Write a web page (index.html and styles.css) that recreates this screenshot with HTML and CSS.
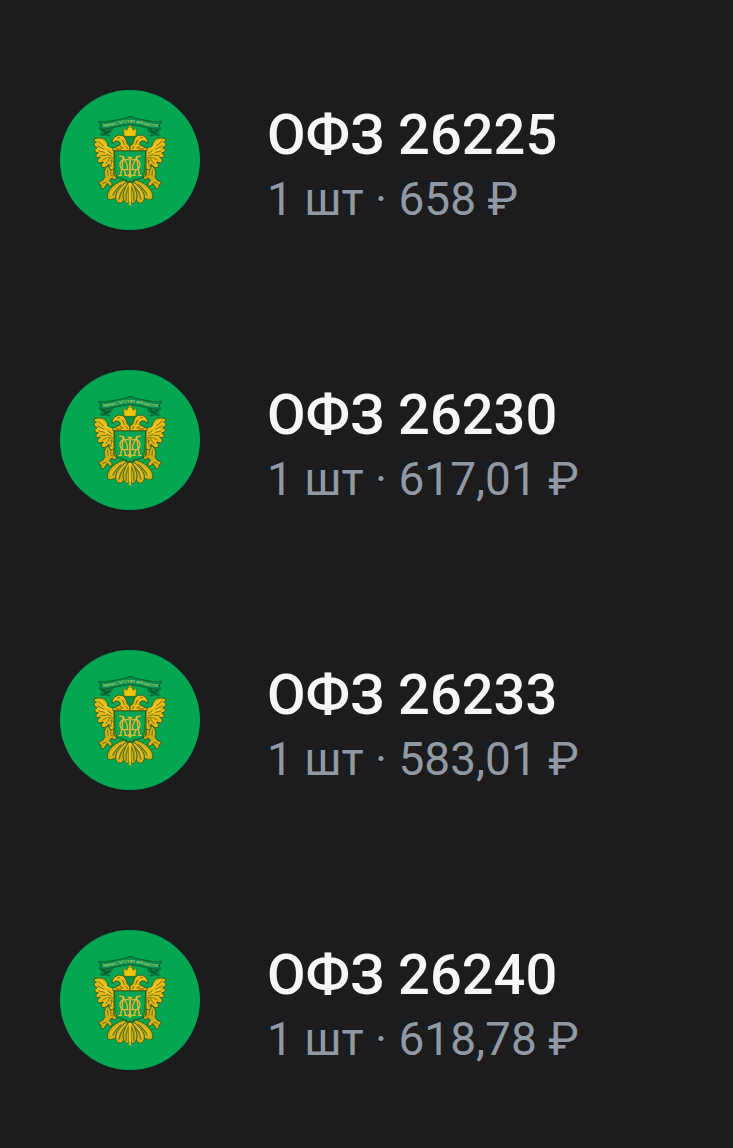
FILE: index.html
```html
<!DOCTYPE html>
<html lang="ru">
<head>
<meta charset="utf-8">
<meta name="viewport" content="width=device-width, initial-scale=1">
<title>ОФЗ</title>
<link rel="stylesheet" href="styles.css">
</head>
<body>
<svg class="defs" aria-hidden="true">
  <defs>
    <g id="eagle-half" stroke-linejoin="round" stroke-linecap="round">
      <!-- tail -->
      <g fill="#d0b118" stroke="#35611d" stroke-width="3">
        <path d="M222 300Q194 308 178 330Q168 347 173 356Q182 364 190 356Q198 360 201 350Q208 328 230 309Z"/>
        <path d="M229 306Q204 324 197 345Q195 361 203 369Q214 373 220 362Q222 345 236 314Z"/>
        <path d="M237 304Q220 329 219 348Q220 366 231 371Q237 368 240 358V304Z"/>
      </g>
      <path d="M189 345Q196 329 214 314M208 357Q210 339 225 321M229 362Q226 346 234 324" fill="none" stroke="#6f7415" stroke-width="4"/>
      <path d="M182 346Q186 333 202 319M202 353Q204 338 217 324" fill="none" stroke="#ecd34d" stroke-width="2"/>
      <!-- leg and claw -->
      <g fill="#cdae16" stroke="#35611d" stroke-width="3">
        <path d="M170 260Q158 274 165 291L158 301L147 305Q144 314 153 315Q150 325 161 326Q167 318 171 312L181 319Q190 316 185 308L178 301L186 294L196 301Q204 291 197 279L190 258Z"/>
        <path d="M173 270L174 286M182 268L183 286M191 274L189 289" fill="none" stroke="#7c7416" stroke-width="3"/>
        <path d="M158 310L166 307L174 312" fill="none" stroke="#7c7416" stroke-width="3"/>
      </g>
      <!-- wing -->
      <g fill="#e8bb14" stroke="#35611d" stroke-width="3">
        <path d="M192 204Q180 208 174 198Q172 182 157 175Q147 172 133 176Q130 183 139 187Q128 189 134 199L142 203Q131 206 136 216L145 219Q133 223 139 233L151 232Q138 240 146 249L160 246Q150 255 156 263Q170 264 177 252Q176 263 181 270L194 266Z"/>
        <path d="M143 184L160 196M144 198L162 208M147 213L164 217M151 227L168 226M158 240L171 233M168 252L179 235M182 260L186 238M174 213L185 220M170 224L184 227M176 232L188 234M180 242L190 245" fill="none" stroke="#7f7614" stroke-width="3"/>
        <path d="M151 181L168 200L188 208M150 206L172 217" fill="none" stroke="#f7d84c" stroke-width="3"/>
      </g>
      <!-- head and neck -->
      <path d="M187 180Q192 168 206 165Q218 163 226 174L232 192L240 200V213H190Q184 204 198 201L211 194Q212 186 204 183L194 184L188 191Z" fill="#e8bb14" stroke="#35611d" stroke-width="3"/>
      <path d="M204 173h4M218 181L223 193M211 200L220 204M228 200L233 206M198 207H214" fill="none" stroke="#735f0d" stroke-width="3"/>
      <!-- ribbon end -->
      <path d="M151 148L172 150L188 144L184 155L173 160L181 168L165 165L151 166L157 157Z" fill="#0c8341" stroke="#075d2d" stroke-width="2"/>
      <path d="M158 152L169 157L178 153M161 163L172 157" fill="none" stroke="#063f24" stroke-width="3"/>
      <!-- monogram side -->
      <g fill="none">
        <path d="M209 229Q217 227 219 234L216 264L211 286M219 229L232 256M222 268L228 286" stroke="#7d7420" stroke-width="6"/>
        <path d="M240 239H226Q210 239 210 254Q210 269 226 269H240M209 229Q217 227 219 234L216 264L211 286M219 229L232 256V269M222 269L228 286M207 286H215M224 286H231" stroke="#d9bf38" stroke-width="4"/>
      </g>
    </g>
    <symbol id="emblem" viewBox="30 30 420 420">
      <circle cx="240" cy="240" r="210" fill="#02a653"/>
      <use href="#eagle-half"/>
      <use href="#eagle-half" transform="translate(480 0) scale(-1 1)"/>
      <path d="M240 308V372" stroke="#f3ca20" stroke-width="6"/>
      <path d="M236 316V366M244 316V366" stroke="#6a7414" stroke-width="2"/>
      <path d="M240 366L235 372L240 379L245 372Z" fill="#c9b018"/>
      <!-- crown -->
      <path d="M223 169L220 144L230 151L235 142L240 132L245 142L250 151L260 144L257 169Z" fill="#f5c60a" stroke="#4c6913" stroke-width="2"/>
      <path d="M236 142H244" stroke="#8a7a0b" stroke-width="2"/>
      <path d="M226 170H254L251 184L240 195L229 184Z" fill="#06974b" stroke="#37661c" stroke-width="2"/>
      <!-- shield outline -->
      <path d="M192 212H288" stroke="#5b6a17" stroke-width="3"/>
      <path d="M192 212V279Q192 289 203 293L227 300L240 307L253 300L277 293Q288 289 288 279V212" fill="none" stroke="#275e20" stroke-width="3"/>
      <!-- monogram centre -->
      <path d="M240 230V288" stroke="#7d7420" stroke-width="8"/>
      <path d="M240 231V290M233 233H247M234 284L240 291L246 284" fill="none" stroke="#d9bf38" stroke-width="5"/>
      <!-- ribbon -->
      <path d="M145 124Q163 128 181 123L218 116Q228 115 235 110H245Q252 115 262 116L299 123Q317 128 335 124L328 136L331 147Q313 149 297 144L263 137Q240 132 217 137L183 144Q167 149 149 147L153 136Z" fill="#05904a" stroke="#075f30" stroke-width="3"/>
      <path id="ribbon-line" d="M159 140Q178 140 193 136Q240 121 287 136Q302 140 323 140" fill="none"/>
      <text class="ribbon-text"><textPath href="#ribbon-line" startOffset="50%" text-anchor="middle">МИНИСТЕРСТВО ФИНАНСОВ</textPath></text>
    </symbol>
  </defs>
</svg>
<ul class="holdings">
  <li class="holding">
    <svg class="logo" role="img" aria-label="Минфин"><use href="#emblem"/></svg>
    <div class="info">
      <div class="name">ОФЗ 26225</div>
      <div class="amount">1 шт · 658 ₽</div>
    </div>
  </li>
  <li class="holding">
    <svg class="logo" role="img" aria-label="Минфин"><use href="#emblem"/></svg>
    <div class="info">
      <div class="name">ОФЗ 26230</div>
      <div class="amount">1 шт · 617,01 ₽</div>
    </div>
  </li>
  <li class="holding">
    <svg class="logo" role="img" aria-label="Минфин"><use href="#emblem"/></svg>
    <div class="info">
      <div class="name">ОФЗ 26233</div>
      <div class="amount">1 шт · 583,01 ₽</div>
    </div>
  </li>
  <li class="holding">
    <svg class="logo" role="img" aria-label="Минфин"><use href="#emblem"/></svg>
    <div class="info">
      <div class="name">ОФЗ 26240</div>
      <div class="amount">1 шт · 618,78 ₽</div>
    </div>
  </li>
</ul>
</body>
</html>
```
FILE: styles.css
```css
body {
  margin: 0;
  background: #1c1c1e;
  font-family: Roboto, "Noto Sans", sans-serif;
}

.defs {
  position: absolute;
  width: 0;
  height: 0;
}

.holdings {
  display: grid;
  gap: 140px;
  margin: 0;
  padding: 90px 60px 76px;
  list-style: none;
}

.holding {
  display: flex;
  align-items: center;
  gap: 67px;
}

.logo {
  flex: none;
  width: 140px;
  height: 140px;
}

.info {
  flex: 1;
  min-width: 0;
  padding-top: 12px;
  white-space: nowrap;
}

.name {
  color: #f7f7fa;
  font-size: 56px;
  font-weight: 500;
  line-height: 66px;
}

.amount {
  color: #9299a2;
  font-size: 46px;
  line-height: 62px;
}

.ribbon-text {
  fill: #a2c873;
  font-size: 12px;
  font-weight: 700;
}
```
